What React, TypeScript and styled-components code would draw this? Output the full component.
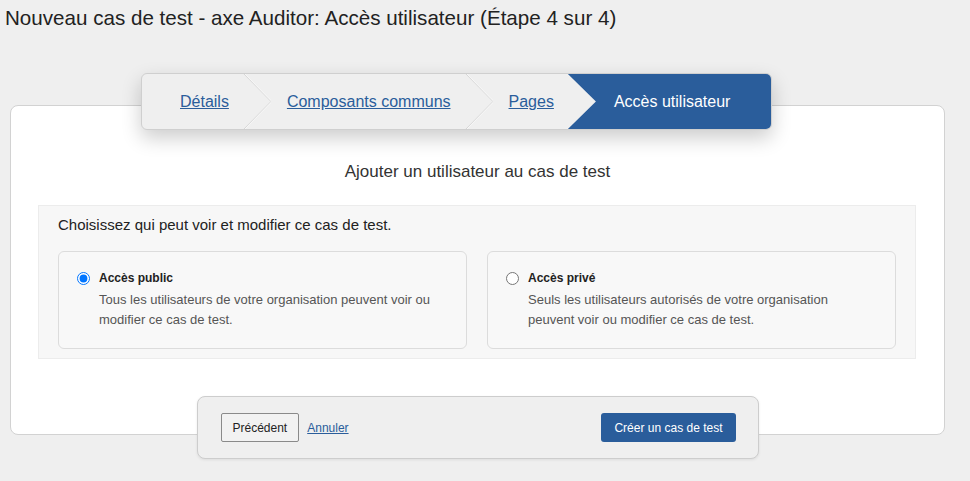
import React from 'react';
import styled, { createGlobalStyle } from 'styled-components';

const GlobalStyle = createGlobalStyle`
  html, body {
    margin: 0;
    padding: 0;
    background: #efefef;
    font-family: "Liberation Sans", Arial, sans-serif;
    color: #222;
  }
`;

const steps = [
  { label: 'Détails', href: '#details' },
  { label: 'Composants communs', href: '#composants' },
  { label: 'Pages', href: '#pages' },
];

const options = [
  {
    id: 'public',
    label: 'Accès public',
    description:
      'Tous les utilisateurs de votre organisation peuvent voir ou modifier ce cas de test.',
    checked: true,
  },
  {
    id: 'prive',
    label: 'Accès privé',
    description:
      'Seuls les utilisateurs autorisés de votre organisation peuvent voir ou modifier ce cas de test.',
    checked: false,
  },
];

const Chevron = () => (
  <Separator width="28" height="57" viewBox="0 0 28 57" aria-hidden>
    <polyline points="0,0 28,28.5 0,57" fill="none" stroke="#d6d6d6" strokeWidth="1" />
    <polyline points="1,0 29,28.5 1,57" fill="none" stroke="#f7f7f7" strokeWidth="1" />
  </Separator>
);

export default function App() {
  return (
    <>
      <GlobalStyle />
      <Page>
        <Title>Nouveau cas de test - axe Auditor: Accès utilisateur (Étape 4 sur 4)</Title>
        <Stepper>
          {steps.map(({ label, href }, index) => (
            <React.Fragment key={label}>
              <Step first={index === 0}>
                <StepLink href={href}>{label}</StepLink>
              </Step>
              {index < steps.length - 1 && <Chevron />}
            </React.Fragment>
          ))}
          <ActiveStep>Accès utilisateur</ActiveStep>
        </Stepper>
        <Card>
          <Heading>Ajouter un utilisateur au cas de test</Heading>
          <Section>
            <Intro>Choisissez qui peut voir et modifier ce cas de test.</Intro>
            <Options>
              {options.map(({ id, label, description, checked }) => (
                <Option key={id} htmlFor={id}>
                  <OptionHead>
                    <Radio type="radio" id={id} name="access" defaultChecked={checked} />
                    <OptionLabel>{label}</OptionLabel>
                  </OptionHead>
                  <OptionText>{description}</OptionText>
                </Option>
              ))}
            </Options>
          </Section>
          <Footer>
            <Button>Précédent</Button>
            <CancelLink href="#annuler">Annuler</CancelLink>
            <PrimaryButton>Créer un cas de test</PrimaryButton>
          </Footer>
        </Card>
      </Page>
    </>
  );
}

const Page = styled.div`
  min-height: 481px;
  padding-bottom: 22px;
  box-sizing: border-box;
`;

const Title = styled.h1`
  margin: 0;
  padding: 6px 0 0 5px;
  font-size: 20.6px;
  line-height: 24px;
  font-weight: normal;
  color: #222;
`;

const Stepper = styled.nav`
  position: relative;
  z-index: 2;
  display: flex;
  align-items: stretch;
  width: 631px;
  height: 57px;
  box-sizing: border-box;
  margin: 43px 0 -25px 141px;
  border: 1px solid #cfcfcf;
  border-radius: 6px;
  overflow: hidden;
  background: #efefef;
  box-shadow: 0 8px 20px rgba(0, 0, 0, 0.2);
`;

const Step = styled.div<{ first: boolean }>`
  display: flex;
  align-items: center;
  padding: 0 14px 0 ${({ first }) => (first ? '38px' : '16px')};
`;

const StepLink = styled.a`
  font-size: 16px;
  color: #2a5d9b;
  text-decoration: underline;
`;

const Separator = styled.svg`
  flex: none;
  display: block;
  margin-top: -1px;
`;

const ActiveStep = styled.div`
  flex: 1;
  display: flex;
  align-items: center;
  padding-left: 46px;
  font-size: 16px;
  color: #fff;
  background: #2a5d9b;
  clip-path: polygon(0 0, 100% 0, 100% 100%, 0 100%, 28px 50%);
`;

const Card = styled.div`
  position: relative;
  width: 935px;
  box-sizing: border-box;
  margin-left: 10px;
  padding-top: 55px;
  background: #fff;
  border: 1px solid #d2d2d2;
  border-radius: 8px;
`;

const Heading = styled.h2`
  margin: 0;
  font-size: 17px;
  line-height: 21px;
  font-weight: normal;
  text-align: center;
  color: #333;
`;

const Section = styled.div`
  margin: 23px 28px 0 27px;
  padding: 9px 19px 9px 19px;
  background: #f7f7f7;
  border: 1px solid #ececec;
`;

const Intro = styled.p`
  margin: 0;
  font-size: 15px;
  line-height: 20px;
  color: #222;
`;

const Options = styled.div`
  display: grid;
  grid-template-columns: 1fr 1fr;
  gap: 20px;
  margin-top: 16px;
`;

const Option = styled.label`
  display: block;
  height: 98px;
  box-sizing: border-box;
  padding: 16px 18px 0;
  background: #f8f8f8;
  border: 1px solid #dcdcdc;
  border-radius: 6px;
`;

const OptionHead = styled.div`
  display: flex;
  align-items: center;
  gap: 9px;
  height: 20px;
`;

const Radio = styled.input`
  margin: 0;
  width: 13px;
  height: 13px;
`;

const OptionLabel = styled.span`
  font-size: 12px;
  font-weight: bold;
  color: #222;
`;

const OptionText = styled.p`
  margin: 2px 0 0 22px;
  font-size: 13px;
  line-height: 20px;
  color: #555;
`;

const Footer = styled.div`
  position: relative;
  display: flex;
  align-items: center;
  width: 562px;
  height: 63px;
  box-sizing: border-box;
  margin: 37px auto -25px;
  padding: 0 22px 0 23px;
  background: #efefef;
  border: 1px solid #cdcdcd;
  border-radius: 8px;
  box-shadow: 0 1px 3px rgba(0, 0, 0, 0.08);
`;

const Button = styled.button`
  height: 29px;
  padding: 0 11px;
  font-family: inherit;
  font-size: 12px;
  color: #222;
  background: #f2f2f2;
  border: 1px solid #8a8a8a;
  border-radius: 2px;
`;

const CancelLink = styled.a`
  margin-left: 8px;
  font-size: 12px;
  color: #2a5d9b;
  text-decoration: underline;
`;

const PrimaryButton = styled.button`
  margin-left: auto;
  height: 29px;
  padding: 0 13px;
  font-family: inherit;
  font-size: 12px;
  color: #fff;
  background: #2a5d9b;
  border: none;
  border-radius: 3px;
`;
